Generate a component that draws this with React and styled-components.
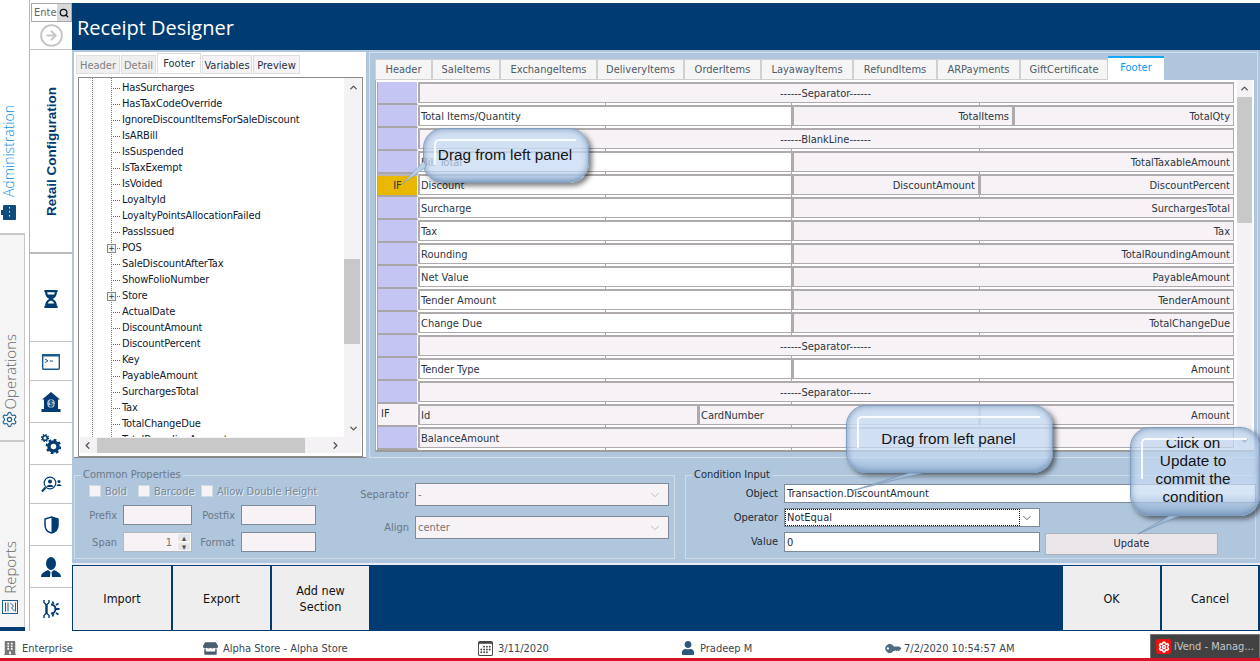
import React from "react";
import styled, { createGlobalStyle } from "styled-components";
import { ChevronDown, ChevronUp, ChevronLeft, ChevronRight, CircleArrowRight, Settings, Search } from "lucide-react";
import { FaHourglassHalf, FaUser, FaBuilding, FaStore, FaKey } from "react-icons/fa";
import { BsCalendar3 } from "react-icons/bs";

const NAVY = "#003c71";
const UI_FONT = `"DejaVu Sans Condensed", "Noto Sans", sans-serif`;

const GlobalStyle = createGlobalStyle`
  html, body { margin: 0; padding: 0; background: #fff; }
  * { box-sizing: border-box; }
  #root { width: 1260px; height: 661px; overflow: hidden; }
`;

const TREE = [
  "HasSurcharges", "HasTaxCodeOverride", "IgnoreDiscountItemsForSaleDiscount", "IsARBill", "IsSuspended",
  "IsTaxExempt", "IsVoided", "LoyaltyId", "LoyaltyPointsAllocationFailed", "PassIssued", "POS",
  "SaleDiscountAfterTax", "ShowFolioNumber", "Store", "ActualDate", "DiscountAmount", "DiscountPercent",
  "Key", "PayableAmount", "SurchargesTotal", "Tax", "TotalChangeDue", "TotalRoundingAmount",
];

const TABS = [
  ["Header", 57], ["SaleItems", 68], ["ExchangeItems", 97], ["DeliveryItems", 87], ["OrderItems", 77],
  ["LayawayItems", 92], ["RefundItems", 84], ["ARPayments", 83], ["GiftCertificate", 88], ["Footer", 56],
];

const LEFT_TABS = [
  ["Header", 44, "off"], ["Detail", 35, "off"], ["Footer", 44, "on"], ["Variables", 50, ""], ["Preview", 47, ""],
];

// widths of the cells after the 41px row head
const ROWS = [
  { cells: [["------Separator------", 816, "center"]] },
  { cells: [["Total Items/Quantity", 374, "left", 1], ["TotalItems", 221, "right"], ["TotalQty", 221, "right"]] },
  { cells: [["------BlankLine------", 816, "center"]] },
  { cells: [["Bill Total", 374, "left", 1], ["TotalTaxableAmount", 442, "right"]] },
  { head: "IF", gold: true, cells: [["Discount", 374, "left", 1], ["DiscountAmount", 187, "right"], ["DiscountPercent", 255, "right"]] },
  { cells: [["Surcharge", 374, "left", 1], ["SurchargesTotal", 442, "right"]] },
  { cells: [["Tax", 374, "left", 1], ["Tax", 442, "right"]] },
  { cells: [["Rounding", 374, "left", 1], ["TotalRoundingAmount", 442, "right"]] },
  { cells: [["Net Value", 374, "left", 1], ["PayableAmount", 442, "right"]] },
  { cells: [["Tender Amount", 374, "left", 1], ["TenderAmount", 442, "right"]] },
  { cells: [["Change Due", 374, "left", 1], ["TotalChangeDue", 442, "right"]] },
  { cells: [["------Separator------", 816, "center"]] },
  { cells: [["Tender Type", 374, "left", 1], ["Amount", 442, "right", 1]] },
  { cells: [["------Separator------", 816, "center"]] },
  { head: "IF", plain: true, cells: [["Id", 280, "left"], ["CardNumber", 281, "left"], ["Amount", 255, "right"]] },
  { cells: [["BalanceAmount", 816, "left"]] },
];

export default function App() {
  return (
    <Page>
      <GlobalStyle />
      <Body>
        <Rail>
          <RailActive>
            <RailIcon viewBox="0 0 16 16" width="16" height="16">
              <rect x="2" y="1" width="13" height="15" rx="1" fill="#0f4c7d" />
              <rect x="0" y="6" width="3" height="5" fill="#0f4c7d" />
              <rect x="8" y="3" width="1" height="1.5" fill="#cfe" />
              <rect x="8" y="7" width="1" height="1.5" fill="#cfe" />
              <rect x="8" y="11" width="1" height="1.5" fill="#cfe" />
            </RailIcon>
            <RailLabel $active>Administration</RailLabel>
          </RailActive>
          <RailSection $h={207} $pad={12} $gap={2}>
            <Settings size={17} color="#1f5f8f" strokeWidth={1.6} />
            <RailLabel>Operations</RailLabel>
          </RailSection>
          <RailSection $h={187} $pad={13} $gap={6}>
            <RailIcon viewBox="0 0 16 14" width="16" height="14">
              <rect x="0.5" y="0.5" width="15" height="13" fill="none" stroke="#1f5f8f" />
              <path d="M3.5 2.5v9M6 2.5v9M8.5 3l3 3-2 2 3 3M13.5 2.5v9" fill="none" stroke="#1f5f8f" />
            </RailIcon>
            <RailLabel>Reports</RailLabel>
          </RailSection>
          <RailFoot />
        </Rail>

        <Nav>
          <SearchRow>
            <SearchInput readOnly value="Enter" />
            <SearchButton><Search size={10} color="#111" strokeWidth={3} /></SearchButton>
          </SearchRow>
          <NavItem $h={28}><CircleArrowRight size={25} color="#c4c4c4" strokeWidth={1.8} /></NavItem>
          <NavItem $h={204} $heavy><VerticalTitle>Retail Configuration</VerticalTitle></NavItem>
          <NavItem $h={88} $nudge={2}><FaHourglassHalf size={18} color={NAVY} /></NavItem>
          <NavItem $h={39} $nudge={1}>
            <svg width="18" height="16" viewBox="0 0 18 16">
              <rect x="0.7" y="0.7" width="16.6" height="14.6" rx="1" fill="none" stroke="#1a5a8a" strokeWidth="1.4" />
              <rect x="0" y="0" width="18" height="2.5" fill="#1a5a8a" />
              <path d="M3 5l3 1.8-3 1.8M7.5 7H11" fill="none" stroke="#1a5a8a" />
            </svg>
          </NavItem>
          <NavItem $h={42}>
            <svg width="20" height="20" viewBox="0 0 20 20">
              <path d="M10 0L1 7.5h2V17h14V7.5h2z" fill={NAVY} />
              <rect x="0.5" y="17" width="19" height="3" fill={NAVY} />
              <ellipse cx="10" cy="11.5" rx="3.8" ry="4.2" fill="#a9bfd3" />
              <path d="M12 9.5c-2-1.5-4-.5-3.5.8s3.5 1 3.5 2.4-2.5 2-4 .8M10 7.5v8" fill="none" stroke={NAVY} strokeWidth="1" />
            </svg>
          </NavItem>
          <NavItem $h={42}>
            <svg width="20" height="20" viewBox="0 0 20 20">
              <circle cx="4" cy="4" r="2.3" fill="none" stroke={NAVY} strokeWidth="1.6" />
              <circle cx="4" cy="4" r="3.5" fill="none" stroke={NAVY} strokeWidth="1.2" strokeDasharray="1.4 1.35" />
              <circle cx="12.5" cy="12.5" r="4.5" fill="none" stroke={NAVY} strokeWidth="3.4" />
              <circle cx="12.5" cy="12.5" r="6.8" fill="none" stroke={NAVY} strokeWidth="2" strokeDasharray="2.7 2.64" />
            </svg>
          </NavItem>
          <NavItem $h={39}>
            <svg width="21" height="17" viewBox="0 0 21 17">
              <circle cx="9" cy="7" r="5.8" fill="none" stroke={NAVY} strokeWidth="1.2" />
              <circle cx="9" cy="5.6" r="2" fill={NAVY} />
              <path d="M5.5 11c.5-3 6.5-3 7 0z" fill={NAVY} />
              <path d="M4.5 11.5L1 15.5" stroke={NAVY} strokeWidth="2" />
              <circle cx="18" cy="5.5" r="1.5" fill={NAVY} />
              <path d="M15.5 10c.2-2.5 4.8-2.5 5 0z" fill={NAVY} />
            </svg>
          </NavItem>
          <NavItem $h={42}>
            <svg width="15" height="18" viewBox="0 0 15 18">
              <path d="M7.5 1L14 3v6c0 4-3 7-6.5 8C4 16 1 13 1 9V3z" fill="#fff" stroke={NAVY} strokeWidth="1.5" />
              <path d="M7.5 1L14 3v6c0 4-3 7-6.5 8z" fill={NAVY} />
            </svg>
          </NavItem>
          <NavItem $h={42}>
            <svg width="20" height="20" viewBox="0 0 20 20">
              <ellipse cx="10" cy="6.5" rx="5" ry="6.5" fill={NAVY} />
              <path d="M0 20c0-4.5 4.5-5.5 7-7l2.5 2-.5 5zM20 20c0-4.5-4.5-5.5-7-7l-2.5 2 .5 5z" fill={NAVY} />
            </svg>
          </NavItem>
          <NavItem $h={42} $flat>
            <svg width="17" height="20" viewBox="0 0 17 20">
              <path d="M1 1v2.5L3 5.5v9L1 16.5V19M6 1v2.5L4 5.5v9L6 16.5V19" fill="none" stroke={NAVY} strokeWidth="1.4" />
              <path d="M8 5.5a4.5 4.5 0 0 1 0 9" fill="none" stroke={NAVY} strokeWidth="2" />
              <path d="M9.5 2.5l1 2.5M13 6l2.5-1.5M13 10h3.5M13 14l2.5 1.5M9.5 17.5l1-2.5" stroke={NAVY} strokeWidth="1.8" />
            </svg>
          </NavItem>
        </Nav>

        <Main>
          <TitleBar>Receipt Designer</TitleBar>
          <Workspace>
            <TopPanels>
              <LeftPanel>
                <LeftTabs>
                  {LEFT_TABS.map(([label, w, state]) => (
                    <LeftTab key={label} $w={w} $state={state}>{label}</LeftTab>
                  ))}
                </LeftTabs>
                <TreeFrame>
                  <TreeBody>
                    <TreeList>
                      {TREE.map((name) => (
                        <TreeRow key={name}>
                          {(name === "POS" || name === "Store") && <Expander>+</Expander>}
                          {name}
                        </TreeRow>
                      ))}
                    </TreeList>
                    <VScroll>
                      <ScrollArrow><ChevronUp size={11} color="#555" strokeWidth={3} /></ScrollArrow>
                      <VTrack $top={163} $h={85} />
                      <ScrollArrow><ChevronDown size={11} color="#555" strokeWidth={3} /></ScrollArrow>
                    </VScroll>
                  </TreeBody>
                  <HScroll>
                    <ChevronLeft size={11} color="#555" strokeWidth={3} />
                    <HThumb />
                    <ChevronRight size={11} color="#555" strokeWidth={3} />
                  </HScroll>
                </TreeFrame>
              </LeftPanel>

              <RightPanel>
                <GridTabs>
                  {TABS.map(([label, w]) => (
                    <GridTab key={label} $w={w} $active={label === "Footer"}>{label}</GridTab>
                  ))}
                </GridTabs>
                <GridFrame>
                  <Rows>
                    {ROWS.map((row, i) => (
                      <Row key={i}>
                        <RowHead $gold={row.gold} $plain={row.plain}>{row.head}</RowHead>
                        {row.cells.map(([text, w, align, white], j) => (
                          <Cell key={j} $w={w} $align={align} $white={white}>{text}</Cell>
                        ))}
                      </Row>
                    ))}
                  </Rows>
                  <GridScroll>
                    <ScrollArrow $h={17}><ChevronUp size={11} color="#555" strokeWidth={3} /></ScrollArrow>
                    <GridThumb />
                    <GridScrollEnd><ChevronDown size={11} color="#555" strokeWidth={3} /></GridScrollEnd>
                  </GridScroll>
                </GridFrame>
              </RightPanel>
            </TopPanels>

            <BottomPanels>
              <CommonBox>
                <CommonLegend>Common Properties</CommonLegend>
                <CommonInner>
                  <PropGrid>
                    <CheckRow>
                      <Check $w={49}><CheckBox />Bold</Check>
                      <Check $w={63}><CheckBox />Barcode</Check>
                      <Check><CheckBox />Allow Double Height</Check>
                    </CheckRow>
                    <PropLabel>Prefix</PropLabel>
                    <PropInput />
                    <PropLabel>Postfix</PropLabel>
                    <PropInput />
                    <PropLabel>Span</PropLabel>
                    <SpanBox>
                      <span>1</span>
                      <Spinner>
                        <SpinBtn>▴</SpinBtn>
                        <SpinBtn>▾</SpinBtn>
                      </Spinner>
                    </SpanBox>
                    <PropLabel>Format</PropLabel>
                    <PropInput />
                  </PropGrid>
                  <SelectGrid>
                    <PropLabel>Separator</PropLabel>
                    <DisabledSelect>-<ChevronDown size={14} color="#a8a8a8" strokeWidth={1.2} /></DisabledSelect>
                    <PropLabel>Align</PropLabel>
                    <DisabledSelect>center<ChevronDown size={14} color="#a8a8a8" strokeWidth={1.2} /></DisabledSelect>
                  </SelectGrid>
                </CommonInner>
              </CommonBox>

              <ConditionBox>
                <ConditionLegend>Condition Input</ConditionLegend>
                <ConditionRow $h={19} $gap={1}>
                  <ConditionLabel>Object</ConditionLabel>
                  <TextField $w={472} readOnly value="Transaction.DiscountAmount" />
                </ConditionRow>
                <ConditionRow $h={19} $gap={5}>
                  <ConditionLabel>Operator</ConditionLabel>
                  <OperatorSelect>
                    <FocusText>NotEqual</FocusText>
                    <ChevronDown size={14} color="#444" strokeWidth={1.4} />
                  </OperatorSelect>
                </ConditionRow>
                <ConditionRow $h={20} $gap={5}>
                  <ConditionLabel>Value</ConditionLabel>
                  <TextField $w={256} readOnly value="0" />
                  <UpdateButton>Update</UpdateButton>
                </ConditionRow>
              </ConditionBox>
            </BottomPanels>
          </Workspace>

          <ActionBar>
            <ActionGroup>
              <ActionButton $w={98}>Import</ActionButton>
              <ActionButton $w={97}>Export</ActionButton>
              <ActionButton $w={97}>Add new<br />Section</ActionButton>
            </ActionGroup>
            <ActionGroup>
              <ActionButton $w={97}>OK</ActionButton>
              <ActionButton $w={96}>Cancel</ActionButton>
            </ActionGroup>
          </ActionBar>
        </Main>
      </Body>

      <StatusBar>
        <StatusItem $w={200}><FaBuilding size={14} color="#777" />Enterprise</StatusItem>
        <StatusItem $w={275}><FaStore size={15} color="#4b5e6e" />Alpha Store - Alpha Store</StatusItem>
        <StatusItem $w={203}><BsCalendar3 size={15} color="#444" />3/11/2020</StatusItem>
        <StatusItem $w={205}><FaUser size={14} color="#2c5a7c" />Pradeep M</StatusItem>
        <StatusItem $w={264}><KeyIcon><FaKey size={13} color="#4f6b7d" /></KeyIcon>7/2/2020 10:54:57 AM</StatusItem>
        <TaskItem>
          <TaskLogo><Settings size={12} color="#fff" strokeWidth={3} /></TaskLogo>
          iVend - Manag...
        </TaskItem>
      </StatusBar>
      <RedLine />

      <Bubble $left={423} $top={128} $w={166} $h={55}>
        <Tail viewBox="0 0 30 30" $left={-22} $top={30} $w={30} $h={30}>
          <polygon points="0,25 22,2 24,8" fill="#bcd0e8" stroke="#8098b4" strokeWidth="0.6" />
        </Tail>
        Drag from left panel
      </Bubble>
      <Bubble $left={846} $top={405} $w={207} $h={68}>
        <Tail viewBox="0 0 80 24" $left={2} $top={66} $w={80} $h={24}>
          <polygon points="2,19 60,1 74,1" fill="#9fb9d6" stroke="#6f8cab" strokeWidth="0.6" />
        </Tail>
        Drag from left panel
      </Bubble>
      <Bubble $left={1130} $top={427} $w={130} $h={89} $faint>
        <Tail viewBox="0 0 50 24" $left={4} $top={87} $w={50} $h={24}>
          <polygon points="3,19 34,1 44,1" fill="#9fb9d6" stroke="#6f8cab" strokeWidth="0.6" />
        </Tail>
        Click on<br />Update to<br />commit the<br />condition
      </Bubble>
    </Page>
  );
}

const Page = styled.div`
  position: relative;
  width: 1260px;
  height: 661px;
  font-family: ${UI_FONT};
  font-size: 11px;
  color: #2b3644;
  overflow: hidden;
`;

const Body = styled.div`
  display: flex;
  height: 631px;
`;

/* ---------- LEFT RAIL ---------- */
const Rail = styled.div`
  width: 30px;
  flex: none;
  border-right: 1px solid #b5b5b5;
  display: flex;
  flex-direction: column;
`;

const RailActive = styled.div`
  height: 233px;
  display: flex;
  flex-direction: column-reverse;
  align-items: center;
  width: 17px;
  padding-bottom: 13px;
  gap: 7px;
`;

const RailSection = styled.div`
  width: 25px;
  height: ${(p) => p.$h}px;
  background: #f5f5f5;
  border-top: 2px solid #c8c8c8;
  border-right: 1px solid #c8c8c8;
  display: flex;
  flex-direction: column-reverse;
  align-items: center;
  padding: 0 5px ${(p) => p.$pad}px 0;
  gap: ${(p) => p.$gap}px;
`;

const RailFoot = styled.div`
  width: 25px;
  height: 4px;
  background: ${NAVY};
`;

const RailIcon = styled.svg`
  flex: none;
`;

const RailLabel = styled.div`
  writing-mode: vertical-rl;
  transform: rotate(180deg);
  font-family: "Open Sans", sans-serif;
  font-weight: 300;
  font-size: ${(p) => (p.$active ? 14 : 15)}px;
  line-height: 18px;
  color: ${(p) => (p.$active ? "#0a8fe8" : "#666")};
`;

/* ---------- NAV COLUMN ---------- */
const Nav = styled.div`
  width: 42px;
  flex: none;
  display: flex;
  flex-direction: column;
  padding-top: 3px;
`;

const SearchRow = styled.div`
  display: flex;
  height: 19px;
  margin-left: 1px;
  border: 1px solid #aaa;
`;

const SearchInput = styled.input`
  width: 25px;
  border: 0;
  padding: 0 0 0 2px;
  font: 11px ${UI_FONT};
  color: #666;
  outline: none;
`;

const SearchButton = styled.div`
  flex: 1;
  background: #d8d8d8;
  display: flex;
  align-items: center;
  justify-content: center;
`;

const NavItem = styled.div`
  height: ${(p) => p.$h}px;
  flex: none;
  display: flex;
  align-items: center;
  justify-content: center;
  padding-top: ${(p) => p.$nudge || 0}px;
  border-bottom: ${(p) => (p.$flat ? "0" : p.$heavy ? "2px solid #bbb" : "1px solid #c4c4c4")};
`;

const VerticalTitle = styled.div`
  writing-mode: vertical-rl;
  transform: rotate(180deg);
  font-family: "Liberation Sans", sans-serif;
  font-weight: 700;
  font-size: 13.5px;
  color: ${NAVY};
`;

/* ---------- MAIN ---------- */
const Main = styled.div`
  flex: 1;
  display: flex;
  flex-direction: column;
  padding-top: 3px;
`;

const TitleBar = styled.div`
  height: 47px;
  flex: none;
  background: ${NAVY};
  color: #fff;
  font-family: "Open Sans", sans-serif;
  font-size: 20px;
  line-height: 50px;
  padding-left: 5px;
`;

const Workspace = styled.div`
  height: 515px;
  flex: none;
  background: #afc6dd;
  display: flex;
  flex-direction: column;
  border-bottom: 2px solid #e6edf4;
`;

const TopPanels = styled.div`
  display: flex;
  height: 408px;
  padding: 2px 2px 0 2px;
  gap: 3px;
`;

const LeftPanel = styled.div`
  width: 292px;
  height: 406px;
  background: #fff;
  padding: 2px 4px 0 2px;
  border-bottom: 1px solid #888;
`;

const LeftTabs = styled.div`
  display: flex;
  height: 20px;
  align-items: flex-end;
  gap: 1px;
`;

const LeftTab = styled.div`
  width: ${(p) => p.$w}px;
  height: ${(p) => (p.$state === "on" ? 21 : 19)}px;
  background: ${(p) => (p.$state === "on" ? "#fff" : p.$state === "off" ? "#efefef" : "#f5f3f6")};
  color: ${(p) => (p.$state === "off" ? "#7f7f7f" : "#26323f")};
  border: 1px solid #dedede;
  text-align: center;
  line-height: 19px;
`;

const TreeFrame = styled.div`
  margin: 3px 0 0 2px;
  width: 285px;
  height: 380px;
  border: 1px solid #8a8a8a;
  display: flex;
  flex-direction: column;
`;

const TreeBody = styled.div`
  height: 359px;
  display: flex;
  overflow: hidden;
`;

const TreeList = styled.div`
  width: 265px;
  flex: none;
  padding: 2px 0 0 43px;
  letter-spacing: -0.15px;
  background:
    repeating-linear-gradient(#777 0 1px, transparent 1px 2px) 13px 0 / 1px 100% no-repeat,
    repeating-linear-gradient(#777 0 1px, transparent 1px 2px) 32px 0 / 1px 100% no-repeat;
  color: #10202f;
`;

const TreeRow = styled.div`
  position: relative;
  height: 16px;
  line-height: 16px;
  white-space: nowrap;

  &::before {
    content: "";
    position: absolute;
    left: -9px;
    top: 8px;
    width: 7px;
    border-top: 1px dotted #666;
  }
`;

const Expander = styled.span`
  position: absolute;
  left: -15px;
  top: 4px;
  width: 9px;
  height: 9px;
  border: 1px solid #8a8a8a;
  background: #f1f1f1;
  font-size: 9px;
  line-height: 7px;
  text-align: center;
  color: #333;
  z-index: 1;
`;

const VScroll = styled.div`
  width: 18px;
  background: #f5f2f5;
  display: flex;
  flex-direction: column;
`;

const ScrollArrow = styled.div`
  height: ${(p) => p.$h || 18}px;
  flex: none;
  display: flex;
  align-items: center;
  justify-content: center;
`;

const VTrack = styled.div`
  flex: 1;
  background: linear-gradient(#c8c8c8, #c8c8c8) 0 ${(p) => p.$top}px / 16px ${(p) => p.$h}px no-repeat;
`;

const HScroll = styled.div`
  height: 16px;
  width: 281px;
  margin-left: 1px;
  background: #f5f2f5;
  display: flex;
  align-items: center;
  padding: 0 0 0 2px;
`;

const HThumb = styled.div`
  width: 208px;
  height: 15px;
  margin: 0 25px 0 4px;
  background: #c8c8c8;
`;

const RightPanel = styled.div`
  width: 889px;
  height: 406px;
  border: 1px solid #d3e0ec;
  padding: 5px 3px 0 5px;
`;

const GridTabs = styled.div`
  display: flex;
  height: 22px;
  align-items: flex-end;
`;

const GridTab = styled.div`
  width: ${(p) => p.$w}px;
  height: ${(p) => (p.$active ? 24 : 21)}px;
  background: ${(p) => (p.$active ? "#fff" : "#f5f5f5")};
  border: ${(p) => (p.$active ? "0" : "1px solid #d0d0d0")};
  border-top: ${(p) => (p.$active ? "2px solid #15a8f5" : "1px solid #d0d0d0")};
  color: ${(p) => (p.$active ? "#0a9bef" : "#4f5b68")};
  text-align: center;
  line-height: 20px;
`;

const GridFrame = styled.div`
  width: 879px;
  height: 372px;
  background: #fff;
  display: flex;
  border-bottom: 2px solid #9c9c9c;
  border-left: 1px solid #a9a9a9;
  padding-top: 2px;
`;

const Rows = styled.div`
  width: 859px;
  flex: none;
  padding-left: 1px;
`;

const Row = styled.div`
  display: flex;
  height: 23px;
  background:
    linear-gradient(#aaa, #aaa) 228px 100% / 1px 2px no-repeat,
    linear-gradient(#aaa, #aaa) 414px 100% / 1px 2px no-repeat,
    linear-gradient(#aaa, #aaa) 602px 100% / 1px 2px no-repeat;
`;

const RowHead = styled.div`
  width: 41px;
  flex: none;
  background: ${(p) => (p.$gold ? "#e8b800" : p.$plain ? "#f6f2f6" : "#c5c5f4")};
  border: ${(p) => (p.$gold ? "2px solid #b9b4b9" : "0")};
  border-bottom: 2px solid #a9a6a9;
  border-left: 1px solid #a9a6a9;
  border-right: 1px solid #fff;
  text-align: ${(p) => (p.$plain ? "left" : "center")};
  padding-left: ${(p) => (p.$plain ? 3 : 0)}px;
  line-height: 20px;
`;

const Cell = styled.div`
  width: ${(p) => p.$w}px;
  height: 21px;
  background: ${(p) => (p.$white ? "#fff" : "#f6f2f6")};
  border: 1px solid #aeaaae;
  border-top-width: 2px;
  border-left-width: 2px;
  text-align: ${(p) => p.$align};
  padding: 0 3px 0 1px;
  line-height: 19px;
  white-space: nowrap;
  overflow: hidden;
  color: #2b3644;
`;

const GridScroll = styled.div`
  width: 15px;
  margin-left: 2px;
  background: #f5f2f5;
  display: flex;
  flex-direction: column;
  height: 370px;
  margin-top: -2px;
`;

const GridThumb = styled.div`
  height: 126px;
  flex: none;
  background: #c8c8c8;
`;

const GridScrollEnd = styled.div`
  flex: 1;
  display: flex;
  align-items: flex-end;
  justify-content: center;
  padding-bottom: 4px;
`;

/* ---------- PROPERTY PANELS ---------- */
const BottomPanels = styled.div`
  display: flex;
  gap: 10px;
  padding: 0 0 0 2px;
  height: 105px;
`;

const CommonBox = styled.fieldset`
  width: 601px;
  height: 92px;
  margin: 9px 0 0;
  padding: 0;
  border: 1px solid #cddae7;
  min-width: 0;
`;

const CommonLegend = styled.legend`
  margin-left: 6px;
  padding: 0 2px;
  line-height: 16px;
  color: #6c7886;
`;

const CommonInner = styled.div`
  display: flex;
`;

const PropGrid = styled.div`
  width: 241px;
  flex: none;
  display: grid;
  grid-template-columns: 48px 69px 49px 75px;
  grid-template-rows: 19px 20px 20px;
  row-gap: 7px;
  align-items: center;
  margin-top: -4px;
`;

const CheckRow = styled.div`
  grid-column: 1 / -1;
  display: flex;
  padding: 5px 0 0 14px;
`;

const Check = styled.label`
  display: flex;
  flex: none;
  align-items: center;
  gap: 4px;
  width: ${(p) => (p.$w ? `${p.$w}px` : "auto")};
  color: #7c8894;
  text-shadow: 1px 1px 0 #e6eef5;
  white-space: nowrap;
`;

const CheckBox = styled.span`
  width: 12px;
  height: 12px;
  flex: none;
  background: #f5f3f6;
  border: 1px solid #d0d8e0;
`;

const PropLabel = styled.div`
  text-align: right;
  padding-right: 6px;
  color: #6c7886;
  white-space: nowrap;
`;

const PropInput = styled.div`
  height: 20px;
  background: #f6f2f6;
  border: 1px solid #7f8a99;
`;

const SpanBox = styled.div`
  height: 20px;
  background: #f6f2f6;
  border: 1px solid #b2b8c0;
  display: flex;
  justify-content: flex-end;
  align-items: center;
  color: #777;
  gap: 5px;
`;

const Spinner = styled.div`
  width: 14px;
  display: flex;
  flex-direction: column;
`;

const SpinBtn = styled.div`
  height: 9px;
  background: #e6e6e8;
  color: #555;
  font-size: 9px;
  line-height: 8px;
  text-align: center;
  border: 1px solid #f6f6f6;
`;

const SelectGrid = styled.div`
  margin-left: 6px;
  display: grid;
  grid-template-columns: 93px 254px;
  grid-template-rows: 23px 23px;
  row-gap: 10px;
  align-items: center;
`;

const DisabledSelect = styled.div`
  height: 23px;
  background: #f6f2f6;
  border: 1px solid #7f8a99;
  display: flex;
  align-items: center;
  justify-content: space-between;
  padding: 0 6px 0 2px;
  color: #777;
`;

const ConditionBox = styled.fieldset`
  width: 571px;
  height: 92px;
  margin: 9px 0 0;
  padding: 0;
  border: 1px solid #cddae7;
  min-width: 0;
`;

const ConditionLegend = styled.legend`
  margin-left: 6px;
  padding: 0 2px;
  line-height: 16px;
  color: #1d2a38;
`;

const ConditionRow = styled.div`
  display: flex;
  align-items: flex-start;
  height: ${(p) => p.$h}px;
  margin-top: ${(p) => p.$gap || 0}px;
`;

const ConditionLabel = styled.div`
  width: 98px;
  flex: none;
  text-align: right;
  padding-right: 6px;
  line-height: 20px;
  color: #1d2a38;
`;

const TextField = styled.input`
  width: ${(p) => p.$w}px;
  height: 100%;
  flex: none;
  background: #fff;
  border: 1px solid #7f8a99;
  padding: 0 2px;
  font: 11px ${UI_FONT};
  color: #1d2a38;
  outline: none;
`;

const OperatorSelect = styled.div`
  width: 256px;
  height: 19px;
  background: #fff;
  border: 1px solid #7f8a99;
  display: flex;
  align-items: center;
  justify-content: space-between;
  padding-right: 5px;
`;

const FocusText = styled.div`
  width: 236px;
  height: 17px;
  border: 1px dotted #111;
  padding-left: 1px;
  line-height: 15px;
  color: #1d2a38;
`;

const UpdateButton = styled.div`
  width: 173px;
  height: 22px;
  margin: 1px 0 0 5px;
  background: #e9e5e9;
  border: 1px solid #a9b2bd;
  text-align: center;
  line-height: 20px;
  color: #1d2a38;
`;

/* ---------- ACTION BAR ---------- */
const ActionBar = styled.div`
  height: 66px;
  flex: none;
  background: ${NAVY};
  display: flex;
  justify-content: space-between;
  padding: 1px 2px 1px 1px;
`;

const ActionGroup = styled.div`
  display: flex;
  gap: 2px;
`;

const ActionButton = styled.div`
  width: ${(p) => p.$w}px;
  background: #eee;
  color: #111;
  font-size: 12.5px;
  line-height: 16px;
  padding-top: 1px;
  display: flex;
  align-items: center;
  justify-content: center;
  text-align: center;
`;

/* ---------- STATUS BAR ---------- */
const StatusBar = styled.div`
  height: 27px;
  display: flex;
  align-items: center;
  padding-left: 3px;
  background: #fff;
`;

const StatusItem = styled.div`
  width: ${(p) => p.$w}px;
  flex: none;
  display: flex;
  align-items: center;
  gap: 5px;
  color: #3b4652;
  padding-top: 7px;
`;

const KeyIcon = styled.span`
  display: inline-flex;
  transform: scaleX(-1) rotate(45deg);
`;

const TaskItem = styled.div`
  width: 112px;
  height: 24px;
  align-self: flex-end;
  background: #424242;
  border: 1px solid #777;
  border-bottom: 0;
  color: #c8c8c8;
  display: flex;
  align-items: center;
  gap: 3px;
  padding-left: 5px;
  white-space: nowrap;
`;

const TaskLogo = styled.span`
  width: 15px;
  height: 15px;
  border-radius: 2px;
  background: #ee1111;
  display: flex;
  align-items: center;
  justify-content: center;
`;

const RedLine = styled.div`
  height: 3px;
  background: #d9102a;
`;

/* ---------- CALLOUTS ---------- */
const Bubble = styled.div`
  position: absolute;
  left: ${(p) => p.$left}px;
  top: ${(p) => p.$top}px;
  width: ${(p) => p.$w}px;
  height: ${(p) => p.$h}px;
  display: flex;
  align-items: center;
  justify-content: center;
  text-align: center;
  padding: 0 ${(p) => (p.$faint ? 4 : 2)}px ${(p) => (p.$faint ? 3 : 1)}px 0;
  font-family: "Liberation Sans", sans-serif;
  font-size: 15.3px;
  line-height: 18px;
  color: #141414;
  border: 1px solid #7f9dbe;
  border-radius: 20px;
  background: ${(p) =>
    p.$faint
      ? "linear-gradient(rgba(190,212,238,.72), rgba(200,220,244,.72) 75%, rgba(140,170,205,.85))"
      : "linear-gradient(rgba(205,222,243,.9), rgba(196,216,242,.72) 60%, rgba(196,216,242,.72) 78%, rgba(155,183,216,.95))"};
  box-shadow: 3px 3px 5px rgba(0, 0, 0, 0.5), inset 0 0 6px rgba(70, 100, 140, 0.6);

  &::before {
    content: "";
    position: absolute;
    left: 10px;
    top: 10px;
    right: 12px;
    height: 45%;
    border-top: 2px solid #fff;
    border-left: 2px solid #fff;
    border-top-left-radius: 5px;
    opacity: 0.9;
    pointer-events: none;
  }
`;

const Tail = styled.svg`
  position: absolute;
  left: ${(p) => p.$left}px;
  top: ${(p) => p.$top}px;
  width: ${(p) => p.$w}px;
  height: ${(p) => p.$h}px;
  overflow: visible;
`;
